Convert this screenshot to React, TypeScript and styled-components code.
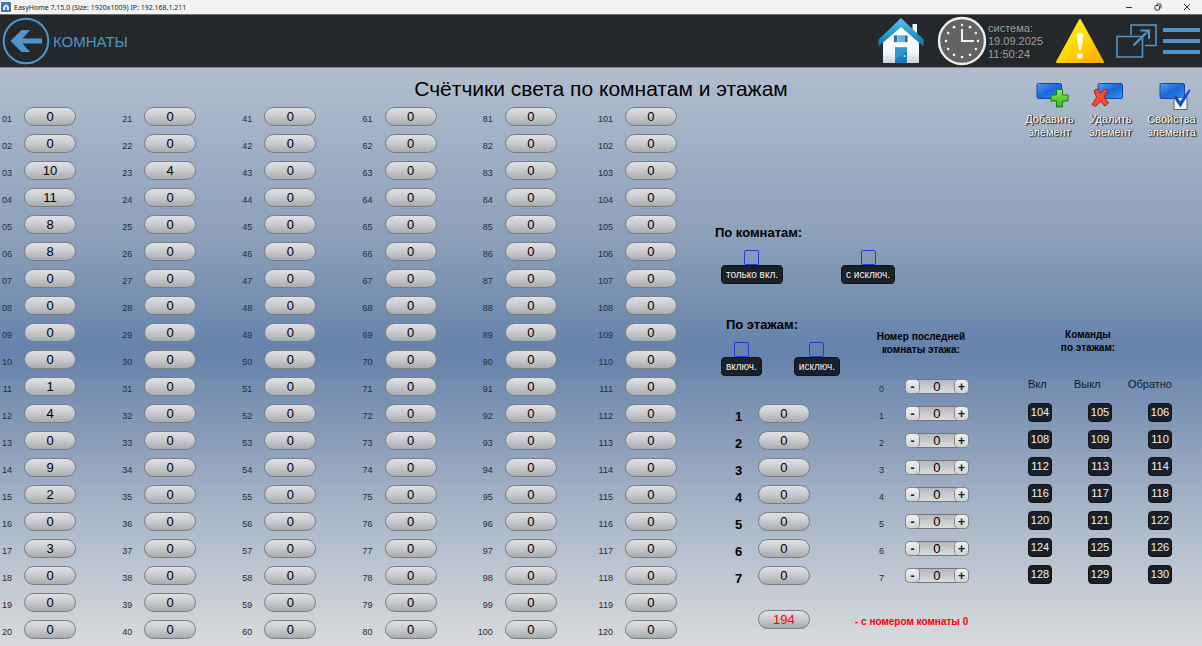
import React from "react";
import styled, { createGlobalStyle } from "styled-components";

const BLUE = "#4f95cb";
const INK = "#1b2028";

const GlobalStyle = createGlobalStyle`
  * { box-sizing: border-box; }
  body {
    margin: 0;
    font-family: "Liberation Sans", Arial, sans-serif;
    color: #000;
  }
  button, input { font-family: inherit; }
  h1, h2, p { margin: 0; }
`;

const Page = styled.div`
  min-height: 100vh;
  display: flex;
  flex-direction: column;
`;

/* ---------- window title bar ---------- */

const TitleBar = styled.div`
  height: 14px;
  display: flex;
  align-items: center;
  justify-content: space-between;
  padding: 0 9px 0 1px;
  background: #f2f4f4;
  font-family: "Noto Sans", "Open Sans", sans-serif;
  font-size: 7px;
  color: #1c1c1c;
  white-space: nowrap;
`;

const TitleGroup = styled.div`
  display: flex;
  align-items: center;
  gap: 3px;
`;

const WindowControls = styled.div`
  display: flex;
  gap: 17px;
`;

const WindowButton = styled.button`
  width: 12px;
  height: 12px;
  padding: 0;
  border: 0;
  background: none;
  display: flex;
  align-items: center;
  justify-content: center;
`;

/* ---------- dark header ---------- */

const Header = styled.header`
  height: 54px;
  display: flex;
  align-items: center;
  justify-content: space-between;
  padding: 0 2px;
  background: #24282b;
  border-top: 1px solid #6f7375;
  border-bottom: 1px solid #7c8289;
`;

const HeaderGroup = styled.div`
  display: flex;
  align-items: center;
`;

const IconButton = styled.button<{ $gap?: number }>`
  padding: 0;
  margin-left: ${(p) => p.$gap ?? 0}px;
  border: 0;
  background: none;
  display: flex;
`;

const RoomName = styled.span`
  margin-left: 2px;
  font-size: 15px;
  color: ${BLUE};
`;

const SystemTime = styled.div`
  width: 67px;
  margin-left: 1px;
  font-size: 11px;
  line-height: 13px;
  color: #9c9ea0;
`;

/* ---------- body ---------- */

const Main = styled.main`
  flex: 1;
  display: grid;
  grid-template-columns: auto 1fr;
  grid-template-rows: 35px auto;
  background: linear-gradient(
    to bottom,
    #b2becd 0%,
    #9fafc5 14%,
    #8da0ba 29%,
    #6582ab 49%,
    #879bb8 63%,
    #afbccb 80%,
    #d9dadd 100%
  );
`;

const Title = styled.h1`
  grid-column: 1 / -1;
  grid-row: 1;
  padding-top: 9px;
  font-size: 21px;
  line-height: 24px;
  font-weight: 400;
  text-align: center;
`;

const RoomGrid = styled.section`
  grid-column: 1;
  grid-row: 2;
  display: grid;
  grid-auto-flow: column;
  grid-template-columns: repeat(5, minmax(90px, 10vw)) 76px;
  grid-template-rows: repeat(20, 27px);
`;

const RoomCell = styled.div`
  display: flex;
  align-items: center;
  gap: 12px;
`;

const RoomLabel = styled.span`
  width: 12px;
  padding-top: 4px;
  display: flex;
  justify-content: flex-end;
  font-size: 9px;
  line-height: 12px;
  color: #262d38;
`;

const Pill = styled.output<{ $alert?: boolean }>`
  width: 52px;
  height: 19px;
  flex: none;
  border: 1px solid #797e85;
  border-radius: 10px;
  background: linear-gradient(to bottom, #dfe1e4, #c8cacd 50%, #a9acaf);
  font-size: 13px;
  line-height: 18px;
  text-align: center;
  color: ${(p) => (p.$alert ? "#ff0000" : "#000")};
`;

const Side = styled.div`
  grid-column: 2;
  grid-row: 1 / 3;
  padding: 13px 0 0 38px;
  display: flex;
  flex-direction: column;
`;

const Toolbar = styled.nav`
  display: flex;
  justify-content: flex-end;
`;

const ToolButton = styled.button`
  width: 61px;
  padding: 0;
  border: 0;
  background: none;
  display: flex;
  flex-direction: column;
  align-items: center;
  gap: 2px;
  font-size: 11px;
  line-height: 13px;
  color: #fff;
  text-shadow: 1px 1px 1px #222, 1px 0 1px #333;
`;

const FilterTitle = styled.h2<{ $indent?: number }>`
  padding-left: ${(p) => p.$indent ?? 0}px;
  font-size: 13px;
  line-height: 16px;
  font-weight: 700;
`;

const RoomFilters = styled.section`
  margin-top: 86px;
`;

const FilterRow = styled.div<{ $gap: number }>`
  display: flex;
  gap: ${(p) => p.$gap}px;
  padding: 9px 0 0 6px;
`;

const Filter = styled.div`
  display: flex;
  flex-direction: column;
  align-items: center;
`;

const FilterBox = styled.input`
  appearance: none;
  width: 15px;
  height: 15px;
  margin: 0;
  border: 1px solid #2c32dc;
  border-radius: 2px;
`;

const FilterLabel = styled.label`
  height: 19px;
  padding: 0 4px;
  border: 1px solid #10141a;
  border-radius: 4px;
  background: ${INK};
  color: #f2f2f2;
  font-size: 10px;
  line-height: 18px;
  white-space: nowrap;
`;

const Floors = styled.div`
  display: flex;
  gap: 16px;
  margin-top: 33px;
  padding-right: 30px;
`;

const FloorColumn = styled.section`
  width: 124px;
`;

const FloorRows = styled.div`
  margin-top: 24px;
`;

const FloorRow = styled.div`
  height: 27px;
  padding-left: 20px;
  display: flex;
  align-items: center;
  gap: 16px;
`;

const FloorLabel = styled.span`
  width: 7px;
  padding-top: 6px;
  font-size: 13px;
  line-height: 15px;
  font-weight: 700;
`;

const TotalRow = styled.div`
  padding: 21px 0 0 43px;
  display: flex;
`;

const RangeColumn = styled.section`
  width: 116px;
  padding-top: 13px;
`;

const ColumnTitle = styled.h2<{ $before?: number; $after?: number }>`
  padding: 0 ${(p) => p.$after ?? 0}px 0 ${(p) => p.$before ?? 0}px;
  font-size: 10px;
  line-height: 13px;
  font-weight: 700;
  text-align: center;
  white-space: nowrap;
`;

const RangeRows = styled.div`
  margin-top: 17px;
`;

const RangeRow = styled.div`
  height: 27px;
  display: flex;
  align-items: center;
  justify-content: space-between;
  padding: 0 2px 0 24px;
`;

const RangeLabel = styled.span`
  padding-top: 4px;
  font-size: 9px;
  line-height: 12px;
  color: #262d38;
`;

const Stepper = styled.div`
  width: 64px;
  height: 15px;
  display: flex;
  align-items: stretch;
  justify-content: space-between;
  border: 1px solid #73777d;
  border-radius: 5px;
  background: linear-gradient(to bottom, #b4b8be, #dadde0);
  font-size: 13px;
  line-height: 14px;
`;

const StepButton = styled.button`
  width: 13px;
  padding: 0;
  border: 0;
  border-radius: 4px;
  box-shadow: 0 0 0 1px #84888d;
  background: linear-gradient(to bottom, #f0f0f0, #d0d2d4);
  font-size: 12px;
  line-height: 12px;
  font-weight: 700;
  color: #111;
`;

const Note = styled.p`
  margin-top: 26px;
  font-size: 10px;
  line-height: 13px;
  font-weight: 700;
  color: #ff0000;
  white-space: nowrap;
`;

const CommandColumn = styled.section`
  width: 144px;
  margin-left: auto;
  padding-top: 11px;
`;

const CommandHead = styled.div`
  margin-top: 24px;
  display: flex;
  justify-content: space-between;
  font-size: 11px;
  line-height: 13px;
  color: #141a24;
`;

const CommandGrid = styled.div`
  margin-top: 12px;
  display: grid;
  grid-template-columns: repeat(3, 24px);
  grid-auto-rows: 19px;
  justify-content: space-between;
  row-gap: 8px;
`;

const CommandButton = styled.button`
  padding: 0;
  border: 1px solid #10141a;
  border-radius: 4px;
  background: ${INK};
  color: #f2f2f2;
  font-size: 11px;
  line-height: 17px;
`;

/* ---------- icons ---------- */

const AppIcon = () => (
  <svg width="10" height="10" viewBox="0 0 10 10">
    <rect width="10" height="10" rx="1" fill="#3f74b5" />
    <path d="M2 5 5 2 8 5V8H2Z" fill="#dce9f6" />
    <path d="M4 5h2v3H4z" fill="#5d8cc4" />
  </svg>
);

const BackIcon = () => (
  <svg width="49" height="49" viewBox="0 0 49 49">
    <circle cx="24" cy="24" r="22.3" fill="none" stroke={BLUE} strokeWidth="2" />
    <path d="M8.5 24 19.5 13H28L20.5 21.500H40V26.500H20.5L28 35H19.5Z" fill={BLUE} />
  </svg>
);

const HomeIcon = () => (
  <svg width="46" height="48" viewBox="0 0 46 48">
    <defs>
      <linearGradient id="roof" x1="0" y1="0" x2="0" y2="1">
        <stop offset="0" stopColor="#5cc3e6" />
        <stop offset="0.6" stopColor="#1f97cc" />
        <stop offset="1" stopColor="#0d6fa6" />
      </linearGradient>
      <linearGradient id="wall" x1="0" y1="0" x2="0" y2="1">
        <stop offset="0" stopColor="#ffffff" />
        <stop offset="0.7" stopColor="#f6f7f8" />
        <stop offset="1" stopColor="#cfd3d7" />
      </linearGradient>
    </defs>
    <path d="M34.500 7H39V20l-4.500-5Z" fill="#f4f5f6" />
    <path d="M5 25 23 9 41 25V46H5Z" fill="url(#wall)" />
    <path d="M23 1 0.500 22.500V29.500L23 10 45.500 29.500V22.500Z" fill="url(#roof)" />
    <rect x="15.500" y="18" width="14" height="7.500" fill="#d4e2ec" />
    <path d="M16 18.500h3v6.500h-3zM26.500 18.500h3v6.500h-3z" fill="#2f6f9c" />
    <rect x="19.500" y="18.500" width="6.500" height="6.500" fill="#5fb2ea" />
    <rect x="17" y="30.500" width="12" height="15.500" fill="#1480b8" />
    <path d="M17 30.500h12v4l-12 8Z" fill="#2f97cb" />
    <circle cx="26.500" cy="39" r="1" fill="#dff1fa" />
  </svg>
);

const ClockIcon = () => (
  <svg width="50" height="50" viewBox="0 0 50 50">
    <circle cx="25" cy="25" r="23" fill="#626365" stroke="#f1f1f1" strokeWidth="2.4" />
    {Array.from({ length: 12 }, (_, i) => {
      const a = (i * Math.PI) / 6;
      return (
        <circle key={i} cx={25 + 16 * Math.sin(a)} cy={25 - 16 * Math.cos(a)} r="1.3" fill="#f5f5f5" />
      );
    })}
    <path d="M25 13V25H37" fill="none" stroke="#f5f5f5" strokeWidth="2" />
  </svg>
);

const WarningIcon = () => (
  <svg width="50" height="47" viewBox="0 0 50 47">
    <defs>
      <linearGradient id="warn" x1="0" y1="0" x2="0.8" y2="1">
        <stop offset="0" stopColor="#ffef3a" />
        <stop offset="0.5" stopColor="#ffdd00" />
        <stop offset="1" stopColor="#fbb000" />
      </linearGradient>
    </defs>
    <path d="M25 2 48 44H2Z" fill="url(#warn)" stroke="url(#warn)" strokeWidth="2" strokeLinejoin="round" />
    <path d="M21.800 17.500C21.800 14 28.200 14 28.200 17.500L26.200 31C25.900 33 24.100 33 23.800 31Z" fill="#fff" />
    <circle cx="25" cy="38" r="2.800" fill="#fff" />
  </svg>
);

const OpenIcon = () => (
  <svg width="42" height="34" viewBox="0 0 42 34" fill="none" stroke={BLUE} strokeWidth="1.6">
    <path d="M15 11V1H40V21.500H29" />
    <path d="M1 12.500H26.500V33H1Z" />
    <path d="M17.500 21.500 30 9" strokeWidth="2.400" />
    <path d="M24.500 6.500H33V15" strokeWidth="2.200" />
    <path d="M28 6 33.500 6V11.500Z" fill={BLUE} stroke="none" />
  </svg>
);

const MenuIcon = () => (
  <svg width="37" height="26" viewBox="0 0 37 26" fill={BLUE}>
    <path d="M0 0h37v4H0zM0 11h37v4H0zM0 22h37v4H0z" />
  </svg>
);

const ToolIcon = ({ kind }: { kind: "add" | "remove" | "props" }) => (
  <svg width="40" height="30" viewBox="0 0 40 30">
    <defs>
      <linearGradient id="screen" x1="0" y1="0" x2="1" y2="1">
        <stop offset="0" stopColor="#5c9cf0" />
        <stop offset="0.5" stopColor="#1668dc" />
        <stop offset="1" stopColor="#2f97ee" />
      </linearGradient>
      <linearGradient id="plus" x1="0" y1="0" x2="0" y2="1">
        <stop offset="0" stopColor="#93ec5c" />
        <stop offset="1" stopColor="#33b41c" />
      </linearGradient>
    </defs>
    <rect
      x={kind === "props" ? 8 : 7}
      y="2.500"
      width="24.500"
      height="15"
      rx="1.500"
      fill="url(#screen)"
      stroke="#1c459c"
    />
    {kind === "add" && (
      <path
        d="M26.500 8.500h6v5.500h5.500v6h-5.500v6h-6v-6h-5.500v-6h5.500Z"
        fill="url(#plus)"
        stroke="#1b7a17"
        strokeLinejoin="round"
      />
    )}
    {kind === "remove" && (
      <path
        d="M3 9.500 6.500 8 9.500 12.500 14 8 17 9.500 13 16 17.500 22 14 25 9.500 20.500 4.500 25.500 1 23.500 5.500 16.500Z"
        fill="#f0502c"
        stroke="#a3230f"
        strokeLinejoin="round"
      />
    )}
    {kind === "props" && (
      <>
        <rect x="22" y="16.500" width="13" height="12" fill="#f7f8fa" stroke="#5b6473" />
        <path d="M21 15.500 24.500 14 28 20.500 37.500 8 38.500 9.500 28.500 26.500Z" fill="#164fc0" />
      </>
    )}
  </svg>
);

/* ---------- data ---------- */

const ROOM_VALUES: Record<number, number> = {
  3: 10, 4: 11, 5: 8, 6: 8, 11: 1, 12: 4, 14: 9, 15: 2, 17: 3, 23: 4,
};
const ROOMS = Array.from({ length: 120 }, (_, i) => i + 1);
const FLOORS = [1, 2, 3, 4, 5, 6, 7];
const COMMANDS = FLOORS.flatMap((f) => [100 + f * 4, 101 + f * 4, 102 + f * 4]);

const FilterOption = ({ id, text }: { id: string; text: string }) => (
  <Filter>
    <FilterBox type="checkbox" id={id} />
    <FilterLabel htmlFor={id}>{text}</FilterLabel>
  </Filter>
);

export default function App() {
  return (
    <Page>
      <GlobalStyle />
      <TitleBar>
        <TitleGroup>
          <AppIcon />
          <span>EasyHome 7.15.0 (Size: 1920x1009) IP: 192.168.1.211</span>
        </TitleGroup>
        <WindowControls>
          <WindowButton aria-label="Свернуть">
            <svg width="8" height="8" stroke="#333" fill="none"><path d="M1 4.500H7" /></svg>
          </WindowButton>
          <WindowButton aria-label="Развернуть">
            <svg width="8" height="8" stroke="#333" fill="none">
              <rect x="1" y="2.500" width="4.500" height="4.500" rx="1" />
              <path d="M2.500 1H6.200Q7 1 7 2V5.500" />
            </svg>
          </WindowButton>
          <WindowButton aria-label="Закрыть">
            <svg width="8" height="8" stroke="#333" fill="none"><path d="M1 1 7 7M7 1 1 7" /></svg>
          </WindowButton>
        </WindowControls>
      </TitleBar>

      <Header>
        <HeaderGroup>
          <IconButton aria-label="Назад"><BackIcon /></IconButton>
          <RoomName>КОМНАТЫ</RoomName>
        </HeaderGroup>
        <HeaderGroup>
          <IconButton aria-label="Домой"><HomeIcon /></IconButton>
          <IconButton aria-label="Часы" $gap={13}><ClockIcon /></IconButton>
          <SystemTime>система:<br />19.09.2025<br />11:50:24</SystemTime>
          <IconButton aria-label="Предупреждения"><WarningIcon /></IconButton>
          <IconButton aria-label="Открыть в окне" $gap={11}><OpenIcon /></IconButton>
          <IconButton aria-label="Меню" $gap={5}><MenuIcon /></IconButton>
        </HeaderGroup>
      </Header>

      <Main>
        <Title>Счётчики света по комнатам и этажам</Title>

        <RoomGrid>
          {ROOMS.map((n) => (
            <RoomCell key={n}>
              <RoomLabel>{String(n).padStart(2, "0")}</RoomLabel>
              <Pill>{ROOM_VALUES[n] ?? 0}</Pill>
            </RoomCell>
          ))}
        </RoomGrid>

        <Side>
          <Toolbar>
            <ToolButton><ToolIcon kind="add" /><span>Добавить<br />элемент</span></ToolButton>
            <ToolButton><ToolIcon kind="remove" /><span>Удалить<br />элемент</span></ToolButton>
            <ToolButton><ToolIcon kind="props" /><span>Свойства<br />элемента</span></ToolButton>
          </Toolbar>

          <RoomFilters>
            <FilterTitle>По комнатам:</FilterTitle>
            <FilterRow $gap={58}>
              <FilterOption id="rooms-on" text="только вкл." />
              <FilterOption id="rooms-except" text="с исключ." />
            </FilterRow>
          </RoomFilters>

          <Floors>
            <FloorColumn>
              <FilterTitle $indent={11}>По этажам:</FilterTitle>
              <FilterRow $gap={32}>
                <FilterOption id="floors-on" text="включ." />
                <FilterOption id="floors-except" text="исключ." />
              </FilterRow>
              <FloorRows>
                {FLOORS.map((f) => (
                  <FloorRow key={f}>
                    <FloorLabel>{f}</FloorLabel>
                    <Pill>0</Pill>
                  </FloorRow>
                ))}
              </FloorRows>
              <TotalRow><Pill $alert>194</Pill></TotalRow>
            </FloorColumn>

            <RangeColumn>
              <ColumnTitle $before={16}>Номер последней<br />комнаты этажа:</ColumnTitle>
              <RangeRows>
                {[0, ...FLOORS].map((f) => (
                  <RangeRow key={f}>
                    <RangeLabel>{f}</RangeLabel>
                    <Stepper>
                      <StepButton>-</StepButton>
                      <span>0</span>
                      <StepButton>+</StepButton>
                    </Stepper>
                  </RangeRow>
                ))}
              </RangeRows>
              <Note>- с номером комнаты 0</Note>
            </RangeColumn>

            <CommandColumn>
              <ColumnTitle $after={24}>Команды<br />по этажам:</ColumnTitle>
              <CommandHead><span>Вкл</span><span>Выкл</span><span>Обратно</span></CommandHead>
              <CommandGrid>
                {COMMANDS.map((c) => <CommandButton key={c}>{c}</CommandButton>)}
              </CommandGrid>
            </CommandColumn>
          </Floors>
        </Side>
      </Main>
    </Page>
  );
}
